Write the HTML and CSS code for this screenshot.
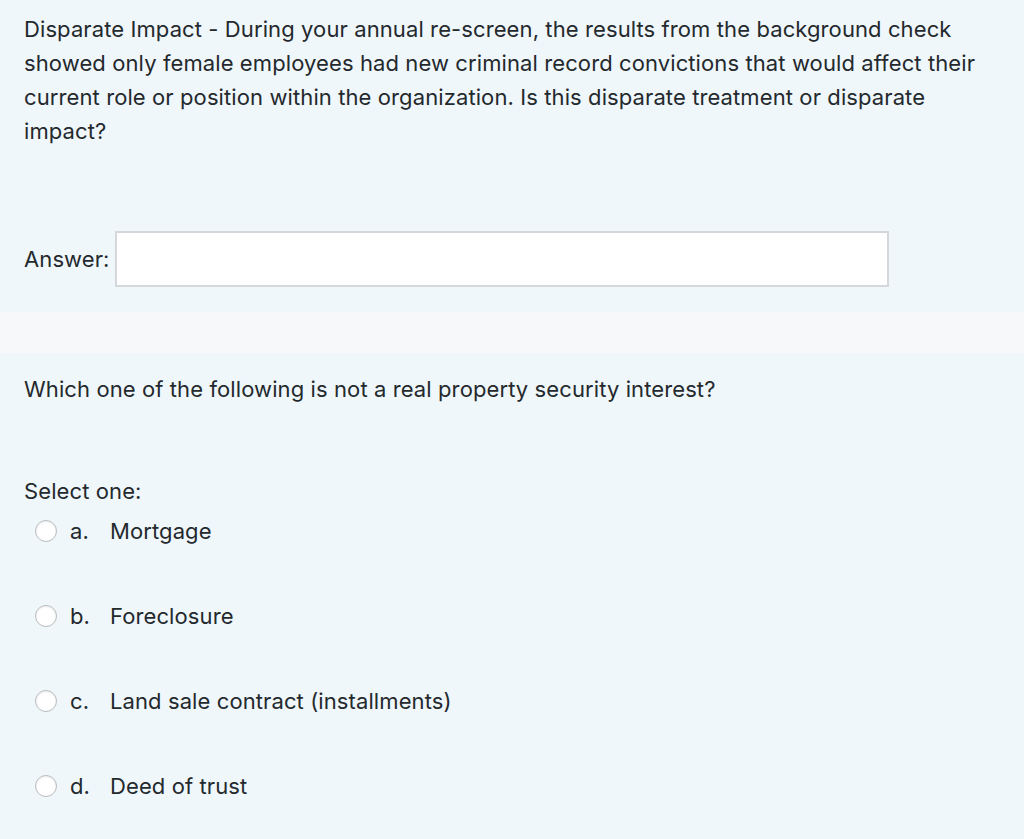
FILE: index.html
```html
<!DOCTYPE html>
<html>
<head>
<meta charset="utf-8">
<link rel="stylesheet" href="styles.css">
</head>
<body>
<div class="que">
  <p class="qtext">Disparate Impact - During your annual re-screen, the results from the background check showed only female employees had new criminal record convictions that would affect their current role or position within the organization. Is this disparate treatment or disparate impact?</p>
  <div class="answer-row">
    <label class="answer-label" for="ans">Answer:</label>
    <input class="answer-input" id="ans" type="text">
  </div>
</div>
<div class="gap"></div>
<div class="que que2">
  <p class="qtext">Which one of the following is not a real property security interest?</p>
  <div class="prompt">Select one:</div>
  <div class="options">
    <label class="opt"><span class="radio"></span><span class="letter">a.</span><span class="opt-text">Mortgage</span></label>
    <label class="opt"><span class="radio"></span><span class="letter">b.</span><span class="opt-text">Foreclosure</span></label>
    <label class="opt"><span class="radio"></span><span class="letter">c.</span><span class="opt-text">Land sale contract (installments)</span></label>
    <label class="opt"><span class="radio"></span><span class="letter">d.</span><span class="opt-text">Deed of trust</span></label>
  </div>
</div>
</body>
</html>
```

FILE: styles.css
```css
html, body {
  margin: 0;
  padding: 0;
  background: #eff7fb;
}
body {
  font-family: Inter, "Noto Sans", sans-serif;
  font-size: 22px;
  line-height: 34px;
  letter-spacing: 0.1px;
  color: #24292d;
  width: 1024px;
}
.que {
  background: #eff7fb;
  padding: 12px 24px 25px 24px;
}
.qtext {
  margin: 0;
}
.answer-row {
  margin-top: 83px;
  display: flex;
  align-items: center;
  gap: 5px;
  height: 56px;
}
.answer-input {
  box-sizing: border-box;
  width: 774px;
  height: 56px;
  border: 2px solid #d4d8dc;
  background: #fff;
  margin: 0;
  padding: 0 10px;
  font: inherit;
}
.gap {
  height: 41px;
  background: #f7f8fa;
}
.que2 {
  padding-top: 19px;
  padding-bottom: 40px;
}
.prompt {
  margin-top: 68px;
}
.options {
  margin-top: 6px;
  display: flex;
  flex-direction: column;
  gap: 51px;
}
.opt {
  display: flex;
  align-items: center;
  height: 34px;
}
.radio {
  box-sizing: border-box;
  width: 22px;
  height: 22px;
  border-radius: 50%;
  border: 1px solid #b9bcbf;
  background: #fff;
  box-shadow: inset 0 1px 2px rgba(0,0,0,0.08);
  margin-left: 11px;
  margin-right: 13px;
}
.letter {
  width: 40px;
}
```
